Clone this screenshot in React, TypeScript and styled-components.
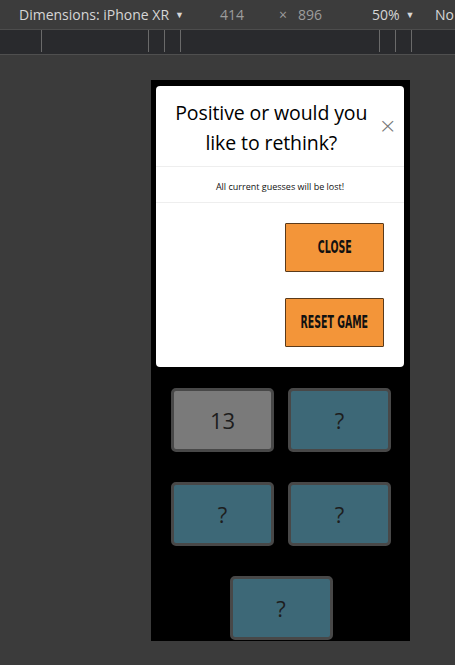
import React from "react";
import styled, { createGlobalStyle } from "styled-components";

const Global = createGlobalStyle`
  html, body { margin: 0; padding: 0; background: #3b3b3b; }
  body { font-family: "Open Sans", "Noto Sans", sans-serif; overflow: hidden; }
`;

const Page = styled.div`
  width: 455px;
  height: 665px;
  display: flex;
  flex-direction: column;
  background: #3b3b3b;
`;

const Toolbar = styled.div`
  height: 30px;
  box-sizing: border-box;
  border-bottom: 1px solid #4d4d4d;
  background: #3c3c3c;
  display: flex;
  align-items: center;
  padding-left: 19px;
  color: #d6d6d6;
  font-size: 14px;
  white-space: nowrap;
`;

const ToolItem = styled.span<{ $w?: number; $muted?: boolean }>`
  display: inline-flex;
  align-items: center;
  gap: 6px;
  width: ${(p) => (p.$w ? `${p.$w}px` : "auto")};
  flex: none;
  color: ${(p) => (p.$muted ? "#9d9d9d" : "#d6d6d6")};
`;

const Caret = styled.span`
  font-size: 9px;
  color: #d6d6d6;
`;

const Ruler = styled.div`
  height: 25px;
  box-sizing: border-box;
  background: #292a2d;
  border-bottom: 1px solid #4f4f4f;
  position: relative;
`;

const Tick = styled.div<{ $x: number }>`
  position: absolute;
  top: 0;
  left: ${(p) => p.$x}px;
  width: 1px;
  height: 22px;
  background: #6a6a6a;
`;

const Canvas = styled.div`
  flex: 1;
  padding: 25px 0 0 151px;
`;

const Phone = styled.div`
  width: 259px;
  height: 561px;
  background: #000;
  box-sizing: border-box;
  padding-top: 6px;
  display: flex;
  flex-direction: column;
`;

const Modal = styled.div`
  background: #fff;
  border-radius: 4px;
  margin: 0 6px 0 5px;
  display: flex;
  flex-direction: column;
`;

const Header = styled.div`
  display: flex;
  align-items: center;
  padding: 12px 7px 8px 12px;
  border-bottom: 1px solid #eeeeee;
`;

const Title = styled.h2`
  flex: 1;
  margin: 0;
  text-align: center;
  font-family: "Open Sans", sans-serif;
  font-weight: 500;
  font-size: 19.5px;
  line-height: 30px;
  color: #000;
  letter-spacing: -0.1px;
`;

const CloseX = styled.span`
  font-size: 22px;
  color: #777;
  font-weight: 300;
  line-height: 1;
  margin-left: 4px;
  margin-top: -4px;
  font-family: "DejaVu Sans", sans-serif;
`;

const Body = styled.div`
  padding: 13px 0 8px;
  text-align: center;
  font-size: 9px;
  line-height: 14px;
  color: #111;
  border-bottom: 1px solid #eeeeee;
`;

const Footer = styled.div`
  display: flex;
  flex-direction: column;
  align-items: flex-end;
  gap: 26px;
  padding: 20px 20px 20px;
`;

const OrangeButton = styled.button`
  width: 99px;
  height: 49px;
  background: #f39539;
  border: 1px solid #5a3a1a;
  border-radius: 1px;
  padding: 0;
  display: flex;
  align-items: center;
  justify-content: center;
`;

const ButtonLabel = styled.span`
  display: inline-block;
  font-family: "DejaVu Sans", sans-serif;
  font-weight: 700;
  font-size: 16px;
  color: #111;
  white-space: nowrap;
  transform: scale(0.59, 1.08);
`;

const Grid = styled.div`
  display: flex;
  flex-wrap: wrap;
  justify-content: center;
  column-gap: 14px;
  row-gap: 30px;
  padding: 21px 19px 0 20px;
`;

const Tile = styled.div<{ $revealed?: boolean }>`
  width: 103px;
  height: 64px;
  box-sizing: border-box;
  border: 3px solid #484848;
  border-radius: 5px;
  background: ${(p) => (p.$revealed ? "#7a7a7a" : "#3d6877")};
  display: flex;
  align-items: center;
  justify-content: center;
  font-family: "Open Sans", sans-serif;
  font-size: 22px;
  color: #1d1d1d;
`;

const ticks = [41, 148, 164, 180, 379, 395, 411];

export default function App() {
  return (
    <Page>
      <Global />
      <Toolbar>
        <ToolItem $w={201}>
          Dimensions: iPhone XR <Caret>▼</Caret>
        </ToolItem>
        <ToolItem $w={59} $muted>414</ToolItem>
        <ToolItem $w={19} $muted>×</ToolItem>
        <ToolItem $w={74} $muted>896</ToolItem>
        <ToolItem $w={63}>
          50% <Caret>▼</Caret>
        </ToolItem>
        <ToolItem>No</ToolItem>
      </Toolbar>
      <Ruler>
        {ticks.map((x) => (
          <Tick key={x} $x={x} />
        ))}
      </Ruler>
      <Canvas>
        <Phone>
          <Modal>
            <Header>
              <Title>Positive or would you like to rethink?</Title>
              <CloseX>×</CloseX>
            </Header>
            <Body>All current guesses will be lost!</Body>
            <Footer>
              <OrangeButton>
                <ButtonLabel>CLOSE</ButtonLabel>
              </OrangeButton>
              <OrangeButton>
                <ButtonLabel>RESET GAME</ButtonLabel>
              </OrangeButton>
            </Footer>
          </Modal>
          <Grid>
            <Tile $revealed>13</Tile>
            <Tile>?</Tile>
            <Tile>?</Tile>
            <Tile>?</Tile>
            <Tile>?</Tile>
          </Grid>
        </Phone>
      </Canvas>
    </Page>
  );
}
